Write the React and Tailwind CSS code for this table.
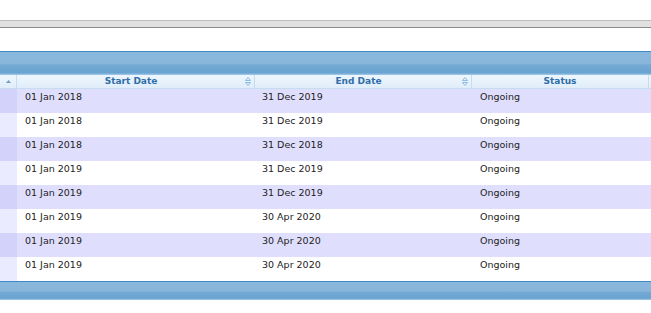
import React from 'react';

const rows = [
    { start: '01 Jan 2018', end: '31 Dec 2019', status: 'Ongoing' },
    { start: '01 Jan 2018', end: '31 Dec 2019', status: 'Ongoing' },
    { start: '01 Jan 2018', end: '31 Dec 2018', status: 'Ongoing' },
    { start: '01 Jan 2019', end: '31 Dec 2019', status: 'Ongoing' },
    { start: '01 Jan 2019', end: '31 Dec 2019', status: 'Ongoing' },
    { start: '01 Jan 2019', end: '30 Apr 2020', status: 'Ongoing' },
    { start: '01 Jan 2019', end: '30 Apr 2020', status: 'Ongoing' },
    { start: '01 Jan 2019', end: '30 Apr 2020', status: 'Ongoing' },
];

const SortIcon = () => (
    <svg width="6" height="9" viewBox="0 0 6 9" className="shrink-0">
        <path d="M3 0.5 L5.5 3.5 L0.5 3.5 Z" fill="none" stroke="#8dbbe3" strokeWidth="1" />
        <path d="M3 8.5 L5.5 5.5 L0.5 5.5 Z" fill="none" stroke="#8dbbe3" strokeWidth="1" />
    </svg>
);

const BlueBar = ({ className }) => (
    <div className={`border-t border-[#3f89c5] bg-[linear-gradient(180deg,#8ab8dd_0%,#88b6db_50%,#74aad5_56%,#6aa3d0_90%,#a2cbea_100%)] ${className}`} />
);

const App = () => {
    return (
        <div className="w-[651px] h-[313px] bg-white overflow-hidden font-['DejaVu_Sans',sans-serif]">
            <div className="h-[20px]" />
            {/* top toolbar strip */}
            <div className="h-[8px] border-t border-b border-t-[#bdbdbd] border-b-[#8c8c8c] bg-[#e0e0e0]" />
            <div className="h-[23px]" />

            {/* grid caption */}
            <BlueBar className="h-[24px]" />

            {/* column headers */}
            <div className="grid grid-cols-[17px_238px_217px_177px_1fr] h-[14px] border-b border-[#c6dcef] bg-[linear-gradient(180deg,#eef6fd,#e0edf9)] text-[9px] font-bold text-[#2f6ea8] leading-[13px]">
                <div className="border-r border-[#c6dcef] flex items-center justify-center">
                    <svg width="5" height="3" viewBox="0 0 5 3"><path d="M2.5 0 L5 3 L0 3 Z" fill="#6f9ecb" /></svg>
                </div>
                <div className="border-r border-[#c6dcef] flex items-center pr-[3px]">
                    <span className="flex-1 text-center">Start Date</span>
                    <SortIcon />
                </div>
                <div className="border-r border-[#c6dcef] flex items-center pr-[3px]">
                    <span className="flex-1 text-center">End Date</span>
                    <SortIcon />
                </div>
                <div className="border-r border-[#c6dcef] flex items-center">
                    <span className="flex-1 text-center">Status</span>
                </div>
                <div />
            </div>

            {/* rows */}
            {rows.map((r, i) => (
                <div
                    key={i}
                    className={`grid grid-cols-[17px_238px_217px_177px_1fr] h-[24px] text-[9.5px] leading-[12px] text-[#222] ${i % 2 === 0 ? 'bg-[#dfdffd]' : 'bg-white'}`}
                >
                    <div className={i % 2 === 0 ? 'bg-[#d2d2fb]' : 'bg-[#ebebff]'} />
                    <div className="pl-[8px] pt-[2px]">{r.start}</div>
                    <div className="pl-[7px] pt-[2px]">{r.end}</div>
                    <div className="pl-[8px] pt-[2px]">{r.status}</div>
                    <div />
                </div>
            ))}

            {/* grid footer */}
            <BlueBar className="h-[19px]" />
        </div>
    );
};

export default App;
